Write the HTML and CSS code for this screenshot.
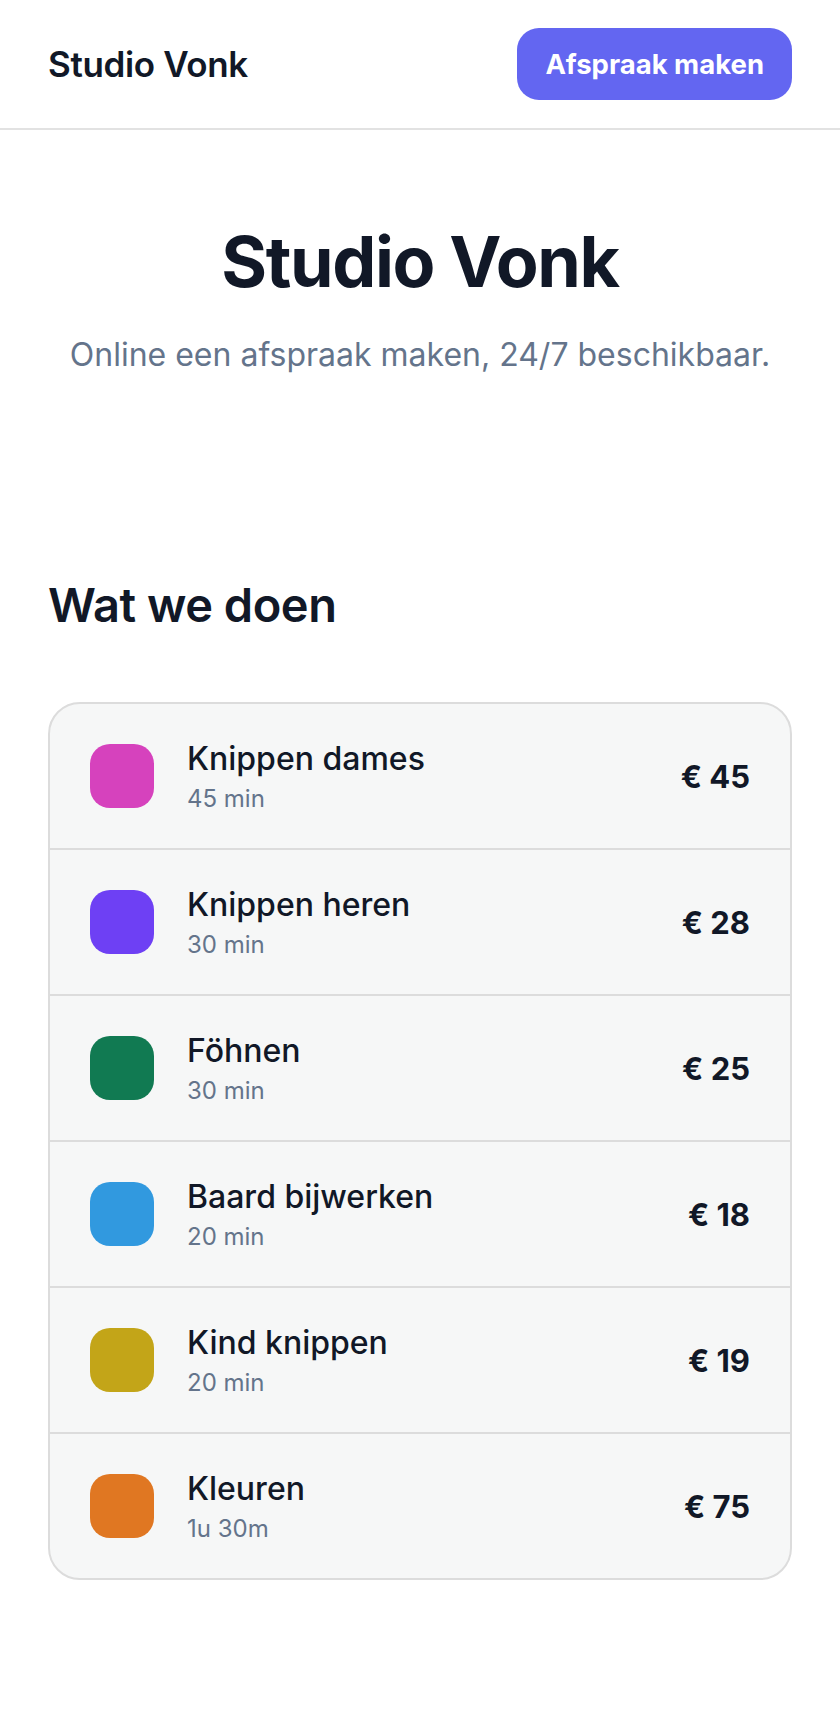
FILE: index.html
```html
<!DOCTYPE html>
<html lang="nl">
<head>
  <meta charset="UTF-8" />
  <meta name="viewport" content="width=device-width, initial-scale=1" />
  <title>Studio Vonk</title>
  <link rel="stylesheet" href="styles.css">
</head>
<body>

  <!-- Top bar -->
  <header class="topbar">
    <div class="brand">Studio Vonk</div>
    <a class="book-btn" href="#">Afspraak maken</a>
  </header>

  <!-- Hero -->
  <section class="hero">
    <h1>Studio Vonk</h1>
    <p class="tagline">Online een afspraak maken, 24/7 beschikbaar.</p>
  </section>

  <!-- Services -->
  <section class="services">
    <h2>Wat we doen</h2>

    <ul class="service-list">
      <li class="service">
        <span class="swatch pink"></span>
        <div class="info">
          <div class="name">Knippen dames</div>
          <div class="duration">45 min</div>
        </div>
        <div class="price">€ 45</div>
      </li>
      <li class="service">
        <span class="swatch purple"></span>
        <div class="info">
          <div class="name">Knippen heren</div>
          <div class="duration">30 min</div>
        </div>
        <div class="price">€ 28</div>
      </li>
      <li class="service">
        <span class="swatch green"></span>
        <div class="info">
          <div class="name">Föhnen</div>
          <div class="duration">30 min</div>
        </div>
        <div class="price">€ 25</div>
      </li>
      <li class="service">
        <span class="swatch blue"></span>
        <div class="info">
          <div class="name">Baard bijwerken</div>
          <div class="duration">20 min</div>
        </div>
        <div class="price">€ 18</div>
      </li>
      <li class="service">
        <span class="swatch olive"></span>
        <div class="info">
          <div class="name">Kind knippen</div>
          <div class="duration">20 min</div>
        </div>
        <div class="price">€ 19</div>
      </li>
      <li class="service">
        <span class="swatch orange"></span>
        <div class="info">
          <div class="name">Kleuren</div>
          <div class="duration">1u 30m</div>
        </div>
        <div class="price">€ 75</div>
      </li>
    </ul>
  </section>

</body>
</html>
```

FILE: styles.css
```css
/* Basic Reset */
* {
  box-sizing: border-box;
}

body {
  margin: 0;
  font-family: Inter, "Noto Sans", Arial, sans-serif;
  color: #111827;
  background: #fff;
}

/* Top bar */
.topbar {
  height: 130px;
  padding: 0 48px;
  display: flex;
  justify-content: space-between;
  align-items: center;
  border-bottom: 2px solid #e2e2e2;
}

.brand {
  font-size: 35px;
  font-weight: 600;
  letter-spacing: -0.01em;
}

.book-btn {
  display: flex;
  align-items: center;
  height: 72px;
  padding: 0 28px;
  background: #6366f1;
  color: #fff;
  font-size: 27.5px;
  font-weight: 700;
  text-decoration: none;
  border-radius: 22px;
}

/* Hero */
.hero {
  text-align: center;
  padding: 90px 48px 0;
}

.hero h1 {
  margin: 0;
  font-size: 70px;
  font-weight: 700;
  line-height: 1.2;
  letter-spacing: -0.02em;
}

.tagline {
  margin: 27px 0 0;
  font-size: 32px;
  line-height: 1.5;
  color: #64748b;
}

/* Services */
.services {
  padding: 198px 48px 0;
}

.services h2 {
  margin: 0 0 69px;
  font-size: 47px;
  font-weight: 600;
  line-height: 1.2;
  letter-spacing: -0.01em;
}

.service-list {
  list-style: none;
  margin: 0;
  padding: 0;
  background: #f6f7f7;
  border: 2px solid #dcdcdc;
  border-radius: 32px;
  overflow: hidden;
}

.service {
  height: 144px;
  padding: 0 40px;
  display: flex;
  align-items: center;
  gap: 33px;
}

.service + .service {
  border-top: 2px solid #dcdcdc;
  height: 146px;
}

.swatch {
  width: 64px;
  height: 64px;
  border-radius: 20px;
  flex-shrink: 0;
}

.pink { background: #d642bd; }
.purple { background: #6e40f4; }
.green { background: #117a52; }
.blue { background: #3199df; }
.olive { background: #c3a518; }
.orange { background: #e07722; }

.info {
  flex: 1;
  padding-top: 3px;
}

.name {
  font-size: 32px;
  font-weight: 500;
  line-height: 1.15;
}

.duration {
  margin-top: 6px;
  font-size: 24px;
  line-height: 30px;
  color: #64748b;
}

.price {
  font-size: 31px;
  font-weight: 700;
}
```
